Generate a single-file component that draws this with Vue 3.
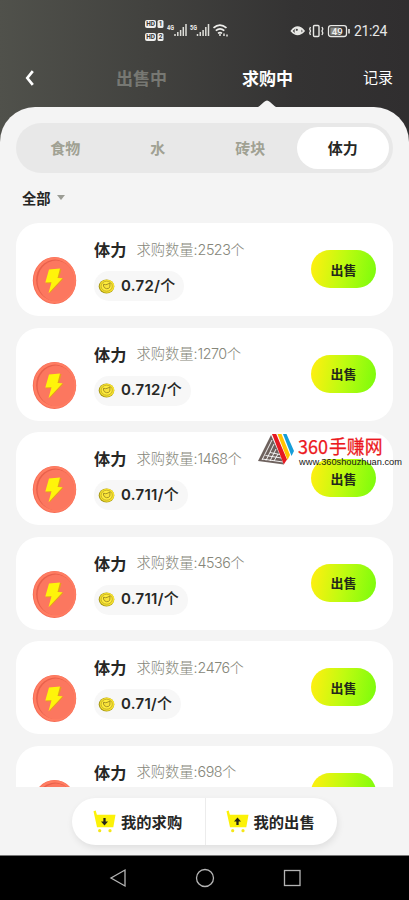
<script setup>
const categories = ['食物', '水', '砖块', '体力']
const orders = [
  { count: '2523', price: '0.72' },
  { count: '1270', price: '0.712' },
  { count: '1468', price: '0.711' },
  { count: '4536', price: '0.711' },
  { count: '2476', price: '0.71' },
  { count: '698', price: '0.71' },
]
const actions = [
  { label: '我的求购', arrow: 'M11.5 8v4', head: 'M8 11.5h7l-3.500 4Z' },
  { label: '我的出售', arrow: 'M11.5 15v-4', head: 'M8 11.500h7l-3.500-4Z' },
]
</script>

<template>
  <div class="screen">
    <header class="header">
      <div class="status">
        <svg class="signals" width="88" height="24" viewBox="0 0 88 24">
          <g fill="#f0f0ee">
            <rect x="0" y="2" width="11" height="8" rx="2" />
            <rect x="12.5" y="2" width="6" height="8" rx="1.5" />
            <rect x="0" y="15" width="11" height="8" rx="2" />
            <rect x="12.5" y="15" width="6" height="8" rx="1.5" />
            <text x="22" y="12" class="net" textLength="7" lengthAdjust="spacingAndGlyphs">4G</text>
            <text x="45" y="12" class="net" textLength="7" lengthAdjust="spacingAndGlyphs">5G</text>
          </g>
          <g class="hd">
            <text x="1.2" y="8.4">HD</text><text x="13.7" y="8.4">1</text>
            <text x="1.2" y="21.4">HD</text><text x="13.7" y="21.4">2</text>
          </g>
          <g stroke="#deded9" stroke-width="1.5">
            <path d="M30 18v-2M32.8 18v-4M35.6 18v-6M38.3 18V9M41 18V6" />
            <path d="M52.5 18v-2M55.3 18v-4M58.1 18v-6M60.8 18V9M63.5 18V6" />
          </g>
          <g fill="none" stroke="#eeeeeb" stroke-width="1.7">
            <path d="M68.5 9.800q6.300-5.500 13 0M70.800 12.700q4.200-3.500 8.500 0M73 15.400q2-1.400 4 0" />
            <path d="M75 16v2M79 15.500v2.500M82 16.500v2" stroke-width="1.400" />
          </g>
        </svg>
        <div class="status-right">
          <svg width="62" height="16" viewBox="0 0 62 16" fill="none" stroke="#e8e8e5">
            <path d="M1.500 8Q7.500 .3 14 8Q7.500 15 1.500 8Z" stroke-width="1.700" />
            <circle cx="8" cy="8" r="3.500" fill="#e8e8e5" stroke="none" />
            <circle cx="6.800" cy="6.800" r="1.100" fill="#444" stroke="none" />
            <rect x="23.500" y="2.500" width="5.500" height="11" rx="1" stroke-width="1.400" />
            <path d="M20.500 4l-.8 2 .8 2-.8 2 .8 2M32 4l.8 2-.8 2 .8 2-.8 2" stroke-width="1.300" />
            <rect x="38.500" y="2.700" width="18" height="10.800" rx="2.500" stroke-width="1.300" />
            <rect x="40.300" y="4.400" width="9" height="7.500" fill="#85857f" stroke="none" />
            <path d="M59 6v4.500" stroke-width="1.600" />
            <text x="41.800" y="11.500" class="battery">49</text>
          </svg>
          <span class="clock">21:24</span>
        </div>
      </div>
      <nav class="top-nav">
        <svg class="back" width="14" height="18" viewBox="0 0 14 18" fill="none" stroke="#fff" stroke-width="2.700">
          <path d="M10.800 2.200L5.300 9l5.500 6.800" />
        </svg>
        <span class="nav-tab idle">出售中</span>
        <span class="nav-tab current">求购中</span>
        <span class="record">记录</span>
      </nav>
      <svg class="pointer" width="24" height="10" viewBox="0 0 24 10"><path d="M0 10Q4 8 9 3Q12 0 15 3Q20 8 24 10Z" fill="#f4f4f4" /></svg>
    </header>

    <main class="sheet">
      <div class="segments">
        <span v-for="name in categories" :key="name" class="segment" :class="{ selected: name === '体力' }">{{ name }}</span>
      </div>
      <div class="filter">全部<i class="caret"></i></div>
      <section class="orders">
        <article v-for="(order, index) in orders" :key="index" class="card">
          <svg class="token" width="46" height="49" viewBox="0 0 46 49">
            <ellipse cx="22.500" cy="24.500" rx="21.700" ry="23.500" fill="#f66b54" />
            <ellipse cx="22.800" cy="24.200" rx="21.200" ry="23" fill="#ff7d62" />
            <ellipse cx="23" cy="24.200" rx="18.900" ry="20.600" fill="#e9614c" />
            <ellipse cx="24" cy="24.900" rx="18.400" ry="20.300" fill="#fc775f" />
            <path d="M18.500 13.500L29.500 13l-2.500 9.500 4.500.3-14 14.700 3-10.500-6.500.500Z" fill="#e5a01c" />
            <path d="M17 13.500L28 12.500l-2.500 9.500 5 .2-14 15 3-11-6.200.300Z" fill="#fff40a" />
          </svg>
          <div class="details">
            <div class="heading"><b>体力</b><span class="quantity">求购数量:<span class="count">{{ order.count }}</span>个</span></div>
            <div class="price">
              <svg width="17" height="15" viewBox="0 0 17 15">
                <ellipse cx="8.500" cy="7.500" rx="7.800" ry="7" fill="#a99a17" />
                <ellipse cx="9" cy="7.200" rx="7.200" ry="6.500" fill="#f7e22c" />
                <ellipse cx="8.700" cy="7.200" rx="5.600" ry="5" fill="#ffec3b" stroke="#b29c28" stroke-width=".7" />
                <path d="M5.500 5.200l2 .5 1.500-.3L12 4l-.2 4Q11 10 8.500 9.700 6 9.300 5.500 7Z" fill="#f9e33a" stroke="#927f22" stroke-width=".8" />
              </svg>
              <span class="amount">{{ order.price }}/</span><span class="unit">个</span>
            </div>
          </div>
          <button class="sell" :class="{ blank: index === orders.length - 1 }"><span>出售</span></button>
        </article>
      </section>
      <div class="actions">
        <div v-for="action in actions" :key="action.label" class="action">
          <svg width="23" height="23" viewBox="0 0 23 23">
            <path d="M.5 1.200l2.200-.7 1.200 4.300H22.500l-2.200 12.400H4Z" fill="#fcf208" />
            <circle cx="6.700" cy="20.700" r="1.600" fill="#f5e619" />
            <circle cx="17" cy="20.700" r="1.600" fill="#f5e619" />
            <path :d="action.arrow" fill="none" stroke="#24251b" stroke-width="2.300" />
            <path :d="action.head" fill="#24251b" />
          </svg>
          <span>{{ action.label }}</span>
        </div>
      </div>
    </main>

    <footer class="system-nav">
      <svg width="20" height="20" viewBox="0 0 20 20"><path d="M17 2v16L3 10Z" /></svg>
      <svg width="20" height="20" viewBox="0 0 20 20"><circle cx="10" cy="10" r="8.500" /></svg>
      <svg width="20" height="20" viewBox="0 0 20 20"><rect x="2.500" y="2.500" width="15.500" height="15" /></svg>
    </footer>

    <svg class="brand" width="150" height="36" viewBox="0 0 150 36">
      <path d="M13 2L0 28l26 3.500Z" fill="#6e625e" />
      <path d="M14 7L4 27M16 11L8 27.500M18 16l-6 12M20 21l-4 7M4 26l21 3M7.500 22.500l16 2.500M12 19.500l10 2" stroke="#fff" stroke-width=".9" fill="none" />
      <path d="M14 1h4.200L29 26.500l-3.200 5Z" fill="#e61920" />
      <path d="M19.500 1h4L32 22l-2.500 5Z" fill="#ffc400" />
      <path d="M25 1h3.500L36 18l-2.500 5Z" fill="#159ed9" />
      <text x="40" y="21" class="brand-name" textLength="30" lengthAdjust="spacingAndGlyphs">360</text>
      <text x="71" y="21" class="brand-name" textLength="53.500" lengthAdjust="spacingAndGlyphs">手赚网</text>
      <text x="41" y="31.500" class="brand-url" textLength="103" lengthAdjust="spacingAndGlyphs">www.360shouzhuan.com</text>
    </svg>
  </div>
</template>

<style>
body { margin: 0; }
</style>

<style scoped>
* { box-sizing: border-box; }
svg { display: block; flex: none; }
.screen { position: relative; width: 409px; height: 900px; overflow: hidden; display: flex; flex-direction: column; background: linear-gradient(90deg, #50514b, #343333 72%, #302e2f); font-family: Inter, "Noto Sans CJK SC", sans-serif; color: #262725; }
.header { position: relative; height: 107px; flex: none; }
.status { height: 60px; padding: 18px 22px 0 145px; display: flex; justify-content: space-between; }
.net { font: 700 7px Roboto, sans-serif; }
.hd text { font: 700 6.5px Roboto, sans-serif; fill: #333; }
.battery { font: 600 9.500px Roboto, sans-serif; fill: #eee; stroke: none; }
.status-right { display: flex; height: 25px; align-items: center; gap: 2px; }
.clock { width: 33px; font: 400 14px Roboto, sans-serif; letter-spacing: -.4px; color: #e7e7e7; }
.top-nav { display: flex; align-items: center; height: 36px; padding-left: 22px; padding-right: 16px; color: #fff; }
.back { margin-right: 80px; }
.nav-tab { width: 52px; font-size: 17px; line-height: 24px; font-weight: 700; white-space: nowrap; }
.idle { color: #777873; margin-right: 74px; }
.current, .idle { padding-top: 1px; }
.record { margin-left: auto; font-size: 15px; line-height: 24px; }
.pointer { position: absolute; left: 255px; top: 99px; }
.sheet { height: 749px; flex: none; background: #f4f4f4; border-radius: 35px 35px 0 0; padding: 16px 16px 0; border-bottom: 1px solid #777; }
.segments { display: grid; grid-template-columns: repeat(4, 92.500px); height: 50px; padding: 4px 3px; border-radius: 25px; background: #e8e8e8; }
.segment { display: flex; align-items: center; justify-content: center; padding-bottom: 1px; border-radius: 22px; color: #a0a193; font-size: 15px; font-weight: 600; }
.selected { color: #262725; background: #fff; font-weight: 700; }
.filter { display: flex; align-items: center; height: 50px; padding: 0 0 1px 6px; font-size: 14.300px; font-weight: 600; gap: 6px; }
.caret { border: 4.500px solid transparent; border-top: 5px solid #9b9c94; border-bottom: 0; }
.orders { height: 564px; overflow: hidden; display: flex; flex-direction: column; gap: 11.500px; }
.card { height: 93px; flex: none; background: #fff; border-radius: 23px; display: flex; padding-left: 16px; padding-right: 17px; }
.token { margin-top: 33px; }
.details { margin-left: 16px; padding-top: 14px; flex: 1; }
.heading { display: flex; align-items: center; height: 24px; font-size: 16.200px; white-space: nowrap; }
.quantity { margin-left: 10px; font-size: 14.300px; font-weight: 300; color: #858679; padding-bottom: 2px; }
.count { letter-spacing: -.5px; }
.price { display: inline-flex; align-items: center; height: 30px; margin-top: 10px; padding: 0 9px 0 4px; border-radius: 15px; background: #f7f7f7; font-size: 15px; line-height: 30px; }
.amount, .unit { padding-bottom: 1px; }
.amount { margin-left: 6px; font-weight: 600; letter-spacing: .3px; }
.unit { font-weight: 500; margin-left: 0; }
.sell { width: 65px; height: 38px; margin-top: 27px; padding: 0; border: 0; border-radius: 19px; background: linear-gradient(100deg, #ffef10 3%, #c0fb10 48%, #79fc0c); font: 600 13px "Noto Sans CJK SC", sans-serif; color: #23291b; }
.blank span { visibility: hidden; }
.actions { display: flex; width: 265px; height: 47px; margin: 11px 0 0 56px; border-radius: 24px; background: #fff; box-shadow: 1px 3px 7px #00000016; }
.action { width: 50%; display: flex; align-items: center; padding-left: 21px; gap: 5px; font-size: 15.300px; font-weight: 600; white-space: nowrap; }
.action span { padding-bottom: 2px; }
.action + .action { border-left: 1px solid #ececec; padding-left: 20px; }
.system-nav { height: 44px; flex: none; background: #000; display: flex; justify-content: center; align-items: center; gap: 67px; fill: none; stroke: #b5b5b5; stroke-width: 1.300; }
.brand { position: absolute; left: 258px; top: 433px; }
.brand-name { font: 400 19px "Noto Sans CJK SC", sans-serif; fill: #ec1820; stroke: #ec1820; stroke-width: .25px; }
.brand-url { font: 400 9.500px "Liberation Sans", sans-serif; fill: #161616; }
</style>
